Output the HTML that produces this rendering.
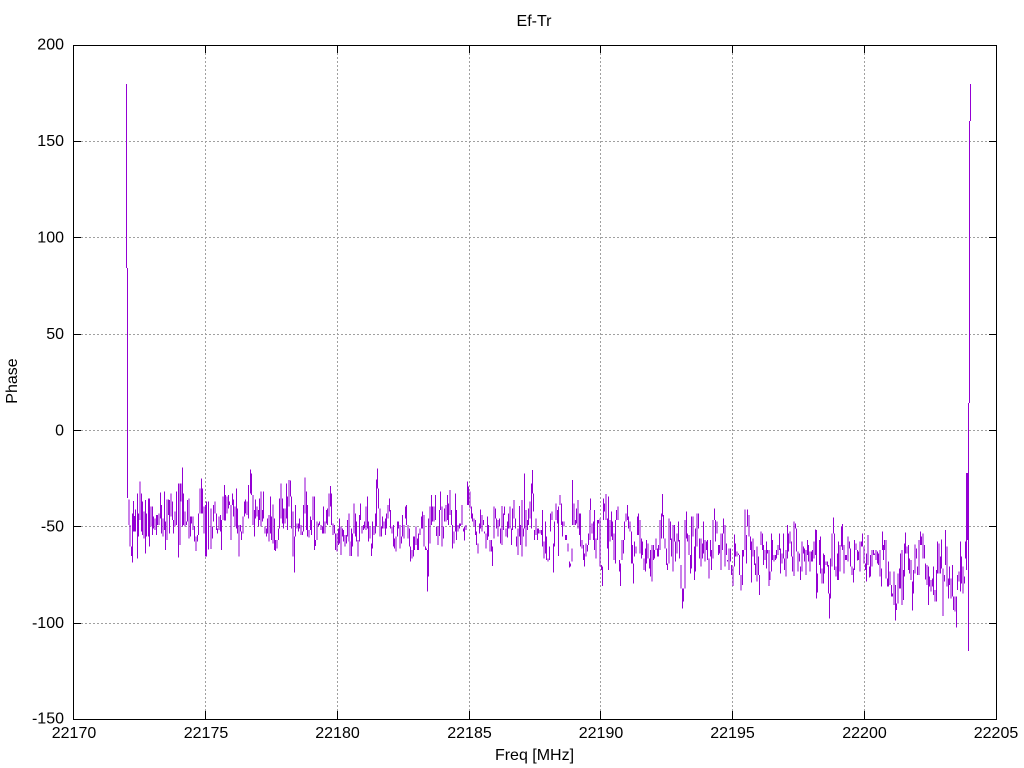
<!DOCTYPE html>
<html><head><meta charset="utf-8"><title>Ef-Tr</title>
<style>
html,body{margin:0;padding:0;background:#fff}
svg{display:block}
text{font-family:"Liberation Sans",sans-serif;font-size:16px;fill:#000}
</style></head><body>
<svg width="1024" height="768" viewBox="0 0 1024 768" xmlns="http://www.w3.org/2000/svg">
<rect width="1024" height="768" fill="#fff"/>
<g shape-rendering="crispEdges" fill="none">
<path stroke="#a0a0a0" stroke-width="1" stroke-dasharray="2 2" d="M81 141.5H989M81 237.5H989M81 334.5H989M81 430.5H989M81 526.5H989M81 623.5H989M205.5 53V711M337.5 53V711M469.5 53V711M600.5 53V711M732.5 53V711M864.5 53V711"/>
<g stroke="#9400d3">
<path stroke-width="1" d="M126.5 84V268M127.5 268V498M966.5 473V570M967.5 473V540M968.5 403V651M969.5 121V403M970.5 84V121"/>
<path transform="translate(110 450) scale(.33333)" stroke-width="3.3" d="M57 148V225M60 225V290M64 290V318M67 190V338M70 153V245M74 198V245M77 178V245M82 130V325M85 190V260M90 95V210M94 130V245M98 155V255M102 185V265M106 150V310M110 190V260M115 145V260M119 145V290M123 170V230M127 170V255M131 200V235M135 205V240M139 195V255M143 195V225M147 190V225M151 128V205M155 165V250M159 205V260M163 125V240M167 215V300M171 148V270M175 148V195M179 150V250M183 130V200M187 155V210M191 210V250M195 185V230M200 125V225M205 100V323M210 100V285M213 100V155M217 52V230M221 130V225M225 185V230M229 215V225M233 150V215M237 145V265M241 200V260M245 200V220M249 200V240M253 228V275M258 260V303M262 255V275M266 190V255M270 115V190M274 85V190M278 115V190M282 170V250M286 165V320M290 155V320M295 155V298M303 175V297M307 230V265M311 165V215M315 155V190M319 190V240M323 235V250M327 200V240M331 195V245M335 210V300M339 140V210M343 105V212M347 135V212M351 140V190M355 135V175M359 155V165M363 165V270M367 130V165M371 148V200M375 170V230M379 115V235M383 175V250M387 225V320M391 225V245M395 245V270M399 200V250M403 155V200M407 148V190M411 155V195M415 105V205M421 58V130M425 70V135M429 135V225M433 180V260M437 148V205M441 170V200M445 180V230M449 145V210M453 125V230M457 180V215M461 125V205M465 230V250M469 235V260M473 205V250M477 195V275M481 140V250M485 200V270M489 163V280M493 205V300M497 270V303M501 270V295M505 235V270M509 145V235M513 100V205M517 145V220M521 175V235M525 175V220M529 100V205M533 140V240M537 90V170M541 92V140M545 140V235M549 185V320M553 260V368M557 165V260M561 220V235M565 220V245M569 205V235M573 225V255M577 245V255M581 165V245M585 82V190M589 125V240M593 165V260M597 240V262M601 200V240M605 210V255M609 140V210M613 140V300M617 270V288M621 215V270M625 220V230M629 215V225M633 225V240M637 230V250M641 170V250M645 215V250M649 180V220M653 175V225M657 130V200M661 108V170M665 130V225M669 220V255M673 225V250M677 250V300M681 250V305M685 235V285M689 205V280M693 230V315M697 235V260M701 240V275M705 255V290M709 255V280M713 210V260M717 190V275"/>
<path transform="translate(340 450) scale(.33333)" stroke-width="3.3" d="M30 275V318M34 235V318M38 250V290M42 160V250M46 190V260M50 215V275M54 270V320M58 195V275M62 160V210M66 230V250M70 225V240M74 215V235M78 170V240M82 140V235M86 215V275M90 230V265M94 280V318M98 215V295M102 230V255M106 190V250M110 88V230M113 55V115M116 115V175M120 175V260M124 230V260M128 200V235M132 215V235M136 205V255M140 190V235M144 165V205M148 145V185M152 180V235M156 230V250M160 225V290M164 265V295M168 260V305M172 215V260M176 215V235M180 225V295M184 260V280M188 195V260M192 225V265M196 170V205M200 165V225M204 225V265M208 235V290M212 290V335M216 300V325M220 260V320M224 260V300M228 230V285M232 265V300M236 250V300M240 235V255M244 200V235M248 185V235M252 195V290M256 290V300M260 295V300M263 300V425M266 205V380M270 170V280M274 135V225M278 170V215M282 170V215M286 135V210M290 230V258M294 230V285M298 180V258M302 125V180M306 170V290M310 230V265M314 175V215M318 165V215M322 135V210M326 160V225M330 120V195M334 180V225M338 225V295M342 245V280M346 130V245M350 180V270M354 225V245M358 220V235M362 220V228M366 165V225M370 235V245M374 230V272M378 225V240M382 95V165M386 110V165M390 125V175M394 170V205M398 190V215M402 205V230M406 210V255M410 245V285M414 280V310M418 220V250M422 178V235M426 195V245M430 210V225M434 245V250M438 250V295M442 200V270M446 225V260M450 270V305M454 270V305M458 290V348M462 170V265M466 175V205M470 205V235M474 210V260M478 205V230M482 235V280M486 168V285M490 190V240M494 170V195M498 235V260M502 215V262M506 190V235M510 170V235M514 235V285M518 175V240M522 150V205M526 205V235M530 260V290M534 235V315M538 168V260M542 225V285M546 150V320M550 235V260M554 70V235M558 180V290M562 210V240M566 175V225M570 155V205M574 100V235M577 60V130M580 130V185M584 240V270M588 205V255M592 235V270M596 235V250M600 240V250M604 240V255M608 180V290M612 275V325M616 215V310M620 260V330M624 325V335M628 290V330M632 190V245M636 185V210M640 280V368M644 215V290M648 160V210M652 180V220M656 170V318"/>
<path transform="translate(550 470) scale(.33333)" stroke-width="3.3" d="M30 75V105M34 100V165M38 155V200M42 155V170M46 195V210M50 195V210M54 220V245M58 275V293M62 280V290M66 235V275M68 30V165M72 100V165M76 150V165M80 115V160M84 90V175M88 130V195M92 130V230M96 210V235M100 225V270M104 250V290M108 220V260M112 225V245M116 190V225M120 120V210M122 85V120M126 160V190M130 155V210M134 120V240M138 205V265M142 150V210M146 150V160M150 145V290M154 285V300M157 290V348M160 85V150M164 100V125M168 72V150M172 145V235M176 80V300M180 150V215M184 125V200M188 155V210M192 190V270M196 150V280M200 120V150M204 110V150M208 270V305M212 280V348M216 210V270M220 210V250M224 155V210M228 130V155M232 105V150M236 140V175M240 155V185M244 185V280M248 225V280M250 280V340M254 215V260M258 230V250M262 140V195M266 130V195M270 150V250M274 205V265M278 215V255M282 265V300M286 235V305M290 210V280M294 220V265M298 265V295M302 240V320M306 225V335M310 225V270M314 240V265M318 205V240M322 235V260M326 225V260M330 150V240M334 130V205M337 72V140M341 135V205M345 205V235M349 235V285M353 280V300M357 145V280M361 155V210M365 205V260M369 165V305M373 165V215M377 215V275M381 190V250M385 155V215M389 210V265M393 285V355M397 355V415M401 355V395M405 150V355M409 125V205M413 190V215M417 195V255M421 255V310M425 140V295M429 140V200M433 230V330M437 175V305M441 130V230M445 130V175M449 205V265M453 205V290M457 220V265M461 155V250M465 210V275M469 215V240M473 210V270M477 265V325M481 210V260M485 240V300M489 150V265M493 115V150M497 150V215M501 155V190M505 225V255M509 225V250M513 190V300M517 190V240M521 145V190M525 165V290M529 220V255M533 270V275M537 235V300M541 235V275M545 285V315M549 290V348M553 193V290M557 220V260M561 245V260M565 250V255M569 255V315M573 315V362M577 240V345M581 240V260M585 118V240M589 195V280M593 118V170M597 135V200M601 200V240M605 215V338M609 205V260M613 240V285M617 280V315M621 230V335M625 260V315M629 315V375M633 185V225M637 190V240M641 225V285M645 240V270M649 215V295M653 240V250M657 240V348"/>
<path transform="translate(760 490) scale(.33333)" stroke-width="3.3" d="M30 245V270M34 130V245M38 150V210M42 195V215M46 195V210M50 180V205M54 165V195M58 130V180M62 175V250M66 190V220M70 130V205M74 205V240M78 180V260M82 105V205M86 130V185M90 125V160M94 155V200M98 200V245M102 95V258M106 100V115M110 115V185M114 185V245M118 190V215M122 230V270M126 155V245M130 170V190M134 175V215M138 180V255M142 150V195M146 165V215M150 185V245M154 185V215M158 180V215M162 155V205M166 118V195M170 120V325M173 250V308M178 150V225M182 140V250M186 235V280M190 190V280M194 195V250M198 215V225M202 215V230M206 225V310M208 310V385M212 205V325M216 130V230M220 82V130M224 130V240M228 230V260M232 190V270M236 155V270M240 165V245M244 110V170M248 102V180M252 165V250M256 195V210M260 195V210M264 140V215M268 155V175M272 175V230M276 230V255M280 235V278M284 150V240M288 160V180M292 180V212M296 185V210M300 155V245M304 155V170M308 130V170M312 170V220M316 220V240M320 190V275M324 135V225M328 230V262M332 195V260M336 180V230M340 180V195M344 190V195M348 180V210M352 185V220M356 190V225M360 180V260M364 235V290M367 125V180M370 165V210M374 150V180M378 150V265M382 265V290M386 215V290M390 245V285M394 285V320M398 310V320M402 245V345M406 285V392M410 340V360M414 250V340M418 235V295M422 190V295M426 180V345M430 240V330M434 160V260M437 128V190M441 170V190M445 165V240M449 205V250M453 210V270M457 275V362M461 240V310M465 163V250M469 175V205M473 230V255M477 150V255M481 125V165M485 140V165M489 130V205M493 165V205M497 220V268M501 225V285M505 230V345M509 260V290M513 270V305M517 265V290M521 230V315M525 300V335M529 240V335M533 155V250M537 160V250M541 200V250M545 148V235M549 235V378M553 255V275M557 120V225M561 170V290M565 265V325M569 230V285M573 265V325M577 225V320M581 320V360M585 320V365M589 320V413M593 255V300M597 245V275M601 155V305M605 200V280M609 230V310M613 260V280M617 155V205"/>
</g>
<path stroke="#000" stroke-width="1" d="M73.5 45.5H996.5V719.5H73.5ZM73.5 141.5H81M73.5 237.5H81M73.5 334.5H81M73.5 430.5H81M73.5 526.5H81M73.5 623.5H81M996.5 141.5H989M996.5 237.5H989M996.5 334.5H989M996.5 430.5H989M996.5 526.5H989M996.5 623.5H989M205.5 45.5V53M337.5 45.5V53M469.5 45.5V53M600.5 45.5V53M732.5 45.5V53M864.5 45.5V53M205.5 719.5V711M337.5 719.5V711M469.5 719.5V711M600.5 719.5V711M732.5 719.5V711M864.5 719.5V711"/>
</g>
<g text-anchor="end">
<text x="64" y="49.5">200</text>
<text x="64" y="146">150</text>
<text x="64" y="242.5">100</text>
<text x="64" y="339">50</text>
<text x="64" y="435.5">0</text>
<text x="64" y="531.5">-50</text>
<text x="64" y="628">-100</text>
<text x="64" y="723.5">-150</text>
</g>
<g text-anchor="middle">
<text x="74" y="738">22170</text>
<text x="206" y="738">22175</text>
<text x="337.5" y="738">22180</text>
<text x="469.5" y="738">22185</text>
<text x="601" y="738">22190</text>
<text x="732.5" y="738">22195</text>
<text x="864.5" y="738">22200</text>
<text x="996" y="738">22205</text>
<text x="534.5" y="760">Freq [MHz]</text>
<text x="534" y="26">Ef-Tr</text>
<text transform="translate(17 381) rotate(-90)">Phase</text>
</g>
</svg>
</body></html>
